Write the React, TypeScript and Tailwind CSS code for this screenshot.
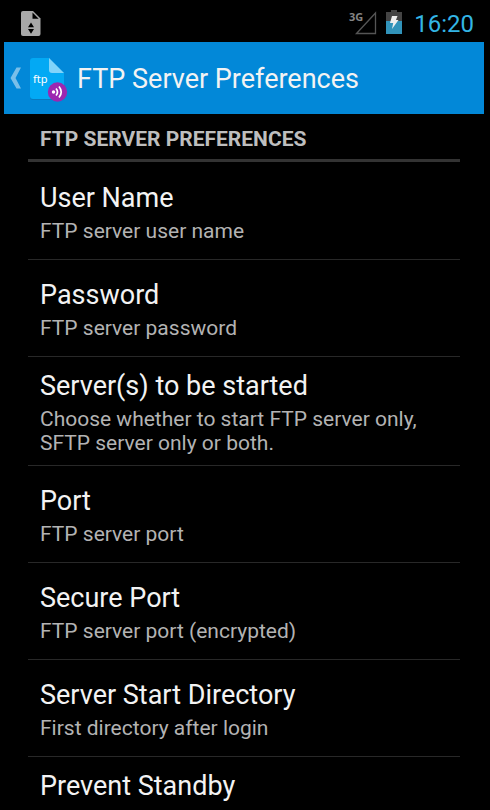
type Preference = {
  title: string;
  summary?: string;
  tall?: boolean;
};

const preferences: Preference[] = [
  { title: "User Name", summary: "FTP server user name" },
  { title: "Password", summary: "FTP server password" },
  {
    title: "Server(s) to be started",
    summary: "Choose whether to start FTP server only, SFTP server only or both.",
  },
  { title: "Port", summary: "FTP server port" },
  { title: "Secure Port", summary: "FTP server port (encrypted)" },
  { title: "Server Start Directory", summary: "First directory after login" },
  { title: "Prevent Standby", tall: true },
];

function StatusBar() {
  return (
    <div className="flex h-[42px] shrink-0 items-center justify-between pr-4 pl-5">
      <svg className="mt-1 h-[27px] w-[22px]" viewBox="0 0 22 27" aria-hidden="true">
        <path d="M3 1h10l7.500 7.500V24a2 2 0 0 1-2 2H3a2 2 0 0 1-2-2V3a2 2 0 0 1 2-2z" fill="#a8a8a8" />
        <path d="M12.500 2.500v6.200h6.200z" fill="#000" />
        <path d="M11 12.500l3 4.800H8zM11 23.800l3-4.800H8z" fill="#000" />
      </svg>
      <div className="flex items-center">
        <svg className="mt-1 h-8 w-8" viewBox="0 0 32 32" aria-hidden="true">
          <text x="3" y="14" fill="#858585" fontFamily="Noto Sans, sans-serif" fontSize="11" fontWeight="700">
            3G
          </text>
          <path d="M10.500 26.500L29.500 6v20.500z" fill="none" stroke="#555" strokeWidth="1.300" />
        </svg>
        <svg className="mt-0.5 ml-2 h-6 w-4" viewBox="0 0 16 24" aria-hidden="true">
          <path d="M5 0h6v2h5v9H0V2h5z" fill="#444" />
          <path d="M0 11h16v13H0z" fill="#3193ba" />
          <path d="M6 6h5.500l-1.500 4h2.500L6 19l1.200-6H4z" fill="#eee" />
        </svg>
        <span className="mt-1.5 ml-3 text-2xl leading-8 text-[#33b5e5]">16:20</span>
      </div>
    </div>
  );
}

function AppIcon() {
  return (
    <svg className="h-[46px] w-10 shrink-0" viewBox="0 0 40 46" aria-hidden="true">
      <path d="M5 3h17l14 14v24a3 3 0 0 1-3 3H5a3 3 0 0 1-3-3V6a3 3 0 0 1 3-3z" fill="#087bc0" />
      <path d="M5 2h16l15 15v23a3 3 0 0 1-3 3H5a3 3 0 0 1-3-3V5a3 3 0 0 1 3-3z" fill="#03a9f4" />
      <path d="M21 2l15 15H24a3 3 0 0 1-3-3z" fill="#81d4fa" />
      <text x="5" y="27" fill="#fff" fontFamily="Noto Sans, sans-serif" fontSize="11">
        ftp
      </text>
      <circle cx="29.500" cy="36" r="9.700" fill="#9c27b0" />
      <circle cx="25.500" cy="36" r="1.700" fill="#fff" />
      <path d="M28 32.500q3 3.500 0 7M31 30.500q4.500 5.500 0 11" fill="none" stroke="#fff" strokeWidth="1.700" />
    </svg>
  );
}

function ActionBar() {
  return (
    <header className="mr-1.5 ml-1 flex h-[72px] shrink-0 items-center bg-[#0288d8]">
      <button type="button" aria-label="Navigate up" className="flex items-center pl-1">
        <svg className="h-6 w-3.5" viewBox="0 0 14 24" aria-hidden="true">
          <path d="M8.500 1.500h4.500L7.500 12l5.500 10.500H8.500L2.500 12z" fill="#79bfe9" />
        </svg>
        <span className="mt-0.5 ml-1.5">
          <AppIcon />
        </span>
      </button>
      <h1 className="mt-0.5 ml-[9px] text-[27px] leading-8 text-[#f3f3f3]">FTP Server Preferences</h1>
    </header>
  );
}

function PreferenceRow({ title, summary, tall }: Preference) {
  return (
    <li className="border-b border-[#282828] last:border-b-0">
      <button
        type="button"
        className={`flex min-h-24 w-full flex-col px-3 py-2.5 text-left ${tall ? "justify-start" : "justify-center"}`}
      >
        <span className="text-[27px] leading-[38px] text-[#f3f3f3]">{title}</span>
        {summary && <span className="mt-0.5 text-[21px] leading-6 text-[#b3b3b3]">{summary}</span>}
      </button>
    </li>
  );
}

export default function App() {
  return (
    <div className="flex h-screen flex-col overflow-hidden bg-black font-['Roboto',sans-serif]">
      <StatusBar />
      <ActionBar />
      <main className="min-h-0 flex-1 overflow-hidden pr-[30px] pl-7">
        <h2 className="border-b-3 border-[#333] px-3 pt-3 pb-[7px] text-[21px] leading-[26px] font-bold text-[#bebebe]">
          FTP SERVER PREFERENCES
        </h2>
        <ul className="pt-px">
          {preferences.map((item) => (
            <PreferenceRow key={item.title} {...item} />
          ))}
        </ul>
      </main>
    </div>
  );
}
